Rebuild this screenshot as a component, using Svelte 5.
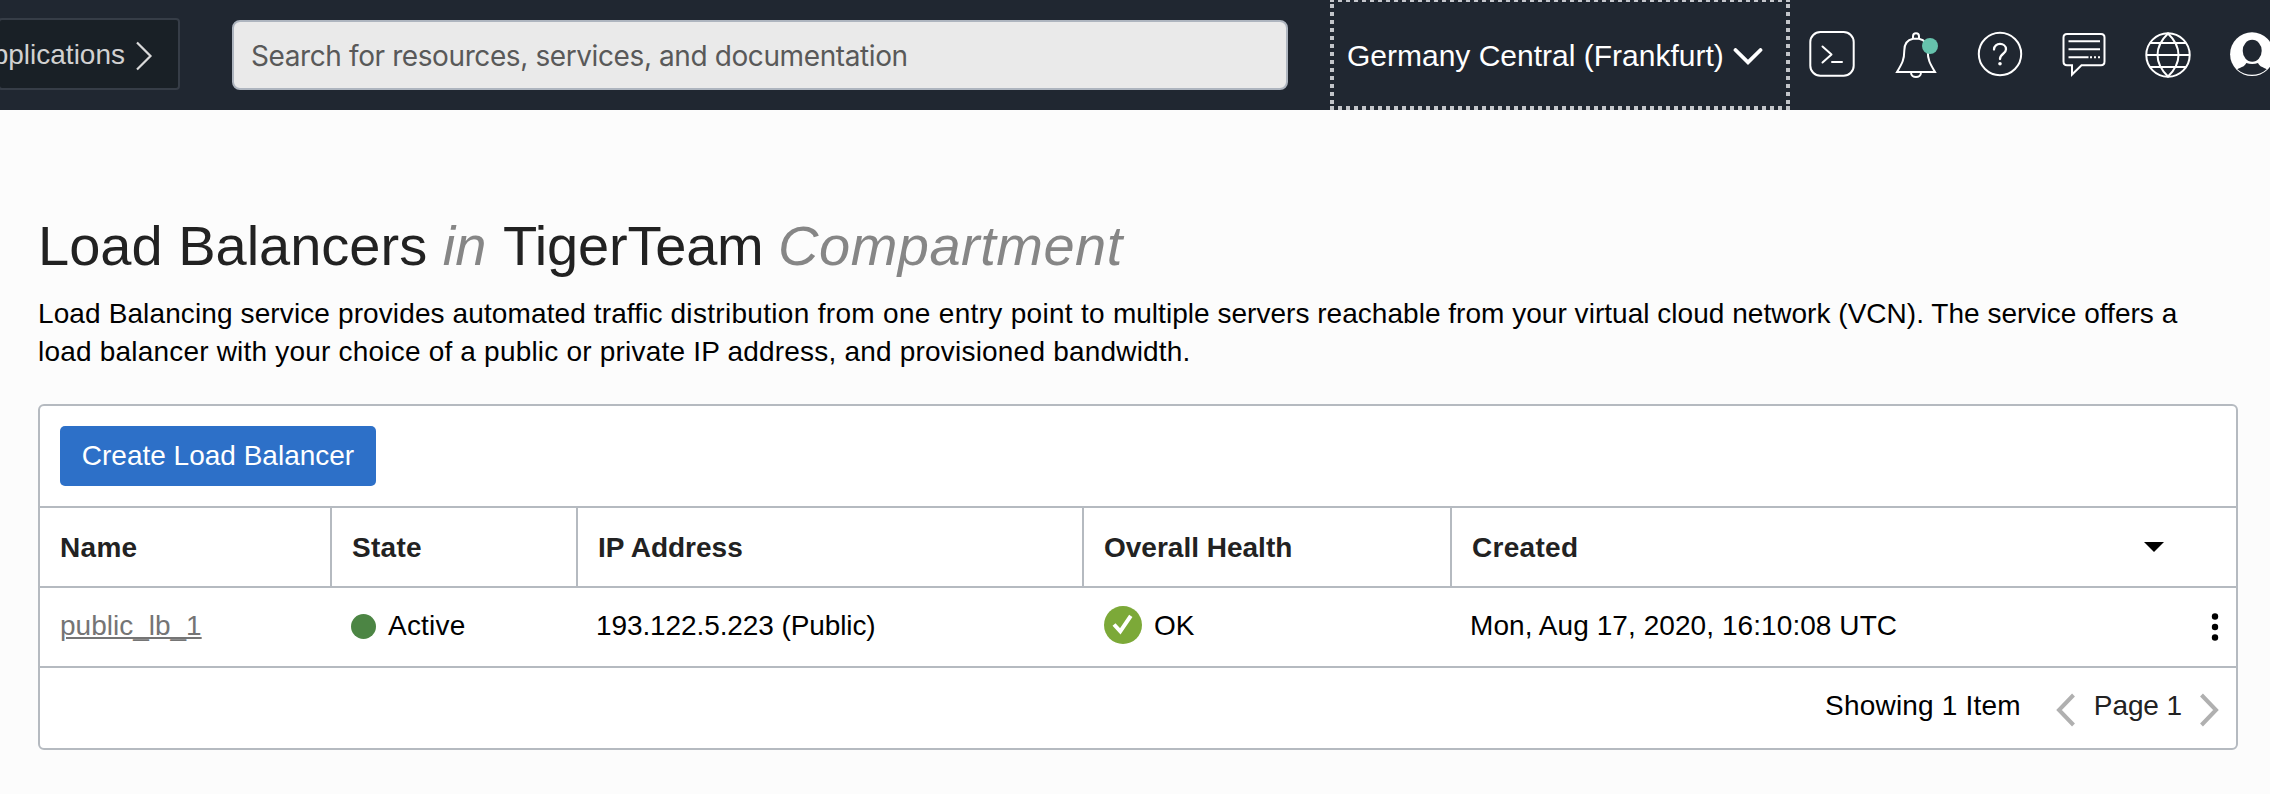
<script>
  const columns = ['Name', 'State', 'IP Address', 'Overall Health', 'Created'];
</script>

<header class="topbar">
  <button class="apps">Applications
    <svg width="18" height="30" viewBox="0 0 18 30"><path d="M2 1.500 15.500 15 2 28.500" /></svg>
  </button>
  <div class="search">Search for resources, services, and documentation</div>
  <button class="region">
    <svg class="dots" width="460" height="110" viewBox="0 0 460 110">
      <path d="M0 0H460M0 108H460" stroke-dasharray="4 4" stroke-width="4" />
      <path d="M2 4V106M458 4V106" stroke-dasharray="4 4" stroke-width="4" />
    </svg>
    <span>Germany Central (Frankfurt)</span>
    <svg class="chev" width="30" height="18" viewBox="0 0 30 18"><path d="M2.500 2 15 14.300 27.500 2" /></svg>
  </button>
  <nav class="tools">
    <svg width="48" height="48" viewBox="0 0 48 48">
      <rect x="2.300" y="2.100" width="43.400" height="43.600" rx="10" />
      <path d="M14.500 16.500 23.500 24.500 14.500 32.500M24 32H34" stroke-linecap="round" stroke-linejoin="round" />
    </svg>
    <svg width="48" height="48" viewBox="0 0 48 48">
      <path d="M21 9V6.300a3 3 0 0 1 6 0V9" />
      <path d="M21 8.800C15 10 12.300 14.500 12.300 20.500C12.300 30 10 33.500 5 42H43C38 33.500 35.700 30 35.700 20.500C35.700 14.500 33 10 27 8.800Z" />
      <path d="M19 42.500C19 48.500 29 48.500 29 42.500" />
      <circle cx="38" cy="16" r="8" fill="#66c2ac" stroke="none" />
    </svg>
    <svg width="48" height="48" viewBox="0 0 48 48">
      <circle cx="24" cy="24" r="21.200" />
      <path d="M18 19.500C18 12 30 12.300 30 19.300C30 24 24 23.500 24 29" stroke-width="2.300" stroke-linecap="round" />
      <circle cx="24" cy="33.700" r="1.800" fill="#fff" stroke="none" />
    </svg>
    <svg width="48" height="48" viewBox="0 0 48 48">
      <path d="M7 4H41Q44.500 4 44.500 7.500V31.500Q44.500 35.200 41 35.200H21.500L12 44.500V35.200H7Q3.500 35.200 3.500 31.500V7.500Q3.500 4 7 4Z" />
      <path d="M8.500 11.300H40M8.500 19.300H40M8.500 27.300H28.500M30 27.300h2M34 27.300h2M38 27.300h2" />
    </svg>
    <svg width="48" height="48" viewBox="0 0 48 48">
      <circle cx="24" cy="25" r="21.700" />
      <path d="M24 3.500C10 17 10 33 24 46.500C38 33 38 17 24 3.500ZM2.300 25H45.700M6 13H42M6 37H42" />
    </svg>
    <svg width="48" height="48" viewBox="0 0 48 48">
      <circle cx="24" cy="24.200" r="21.900" fill="#fff" stroke="none" />
      <g fill="#202731" stroke="none">
        <ellipse cx="24.200" cy="20.800" rx="9.500" ry="11" />
        <path d="M9.300 39.300C13 37 16.500 37 18.300 33C22 34.300 26.500 34.300 30 33C31.800 37 35.200 37 38.700 39.300C30.500 46.700 17.500 46.700 9.300 39.300Z" />
      </g>
    </svg>
  </nav>
</header>

<main>
  <h1>Load Balancers <em>in</em> <span class="name">TigerTeam</span> <em class="kind">Compartment</em></h1>
  <p>
    <span class="line">Load Balancing service provides automated traffic <span class="loose">distribution from one entry point to</span> <span class="tight">multiple servers reachable from your virtual cloud network (VCN). The service offers a</span></span>
    <span class="line last">load balancer with your choice of a public or private IP address, and provisioned bandwidth.</span>
  </p>
  <section class="panel">
    <div class="toolbar"><button class="create">Create Load Balancer</button></div>
    <div class="row head">
      {#each columns as c}
        <div class:wide={c === 'Name' || c === 'State' || c === 'Created'}>{c}
          {#if c === 'Created'}<svg class="sort" width="20" height="10" viewBox="0 0 20 10"><path d="M0 0H20L10 10Z" /></svg>{/if}
        </div>
      {/each}
    </div>
    <div class="row body">
      <div><a href="#lb">public_lb_1</a></div>
      <div class="state"><i class="dot"></i>Active</div>
      <div class="ip">193.122.5.223 (Public)</div>
      <div><svg class="check" width="38" height="38" viewBox="0 0 38 38"><circle cx="19" cy="19" r="19" fill="#7ca938" /><path d="M10 18.500 16.300 25.300 26.800 9.800" fill="none" stroke="#fff" stroke-width="4" /></svg>OK</div>
      <div class="date">Mon, Aug 17, 2020, 16:10:08 UTC
        <svg class="kebab" width="8" height="28" viewBox="0 0 8 28"><circle cx="4" cy="3.500" r="3.200" /><circle cx="4" cy="14" r="3.200" /><circle cx="4" cy="24.500" r="3.200" /></svg>
      </div>
    </div>
    <footer>
      <span class="count">Showing 1 Item</span>
      <svg width="20" height="34" viewBox="0 0 20 34"><path d="M17.500 2 3 17 17.500 32" /></svg>
      <span class="page">Page 1</span>
      <svg width="20" height="34" viewBox="0 0 20 34"><path d="M2.500 2 17 17 2.500 32" /></svg>
    </footer>
  </section>
</main>

<style>
  :global(body) { background: #fcfcfc; }
  .topbar, main { font-family: "Liberation Sans", Arial, sans-serif; font-size: 28px; box-sizing: border-box; }
  button { font: inherit; color: inherit; box-sizing: border-box; border: 0; margin: 0; padding: 0; background: none; white-space: nowrap; }
  svg { flex: none; display: block; fill: none; }
  .topbar { width: 2270px; height: 110px; background: #202731; display: flex; align-items: center; overflow: hidden; color: #fff; }
  .apps { width: 182px; height: 72px; margin: -2px 0 0 -2px; flex: none; display: flex; align-items: center; justify-content: flex-end; gap: 10px; padding: 1px 25px 0 0; border: 2px solid #363d47; border-radius: 4px; background: #192026; color: #d1d1d1; }
  .apps svg { margin-top: 3px; }
  .apps path { stroke: #dadada; stroke-width: 2.200; }
  .search { box-sizing: border-box; width: 1056px; height: 70px; margin-left: 52px; flex: none; display: flex; align-items: center; padding: 2px 0 0 17px; border: 2px solid #aeb5bf; border-radius: 8px; background: #eaeaea; color: #595959; font-family: Inter, sans-serif; letter-spacing: -0.4px; white-space: nowrap; }
  .region { width: 460px; height: 110px; margin-left: 42px; flex: none; display: flex; align-items: center; position: relative; padding: 1px 0 0 17px; font-size: 30px; }
  .dots { position: absolute; inset: 0; stroke: #c3c5ca; }
  .chev { margin-left: 9px; margin-top: 2px; }
  .chev path { stroke: #fff; stroke-width: 3.800; stroke-linecap: round; }
  .tools { display: flex; align-items: center; gap: 36px; margin: -2px 0 0 18px; }
  .tools svg { stroke: #fff; stroke-width: 2; }
  main { padding: 104px 0 0 38px; width: 2238px; }
  h1 { margin: 0; font-size: 56px; font-weight: 400; line-height: 64px; color: #222; white-space: nowrap; }
  h1 em { color: #868686; }
  .name { margin-left: 1px; letter-spacing: -0.2px; }
  .kind { margin-left: -1px; letter-spacing: 0.5px; }
  p { margin: 17px 0 33px; line-height: 38px; white-space: nowrap; color: #000; }
  .line { display: block; letter-spacing: 0.115px; }
  .loose { letter-spacing: 0.31px; }
  .tight { letter-spacing: 0.03px; }
  .last { letter-spacing: 0.2px; }
  .panel { box-sizing: border-box; width: 2200px; height: 346px; border: 2px solid #b5bac0; border-radius: 6px; background: #fff; color: #000; }
  .toolbar { height: 102px; padding: 20px; box-sizing: border-box; border-bottom: 2px solid #b5bac0; }
  .create { height: 60px; width: 316px; background: #2d70c8; color: #fff; border-radius: 5px; }
  .row { display: grid; grid-template-columns: 292px 246px 506px 368px 1fr; height: 80px; box-sizing: border-box; border-bottom: 2px solid #b5bac0; }
  .row > div { display: flex; align-items: center; padding-left: 20px; box-sizing: border-box; white-space: nowrap; }
  .head { font-weight: 700; color: #222; }
  .head > div { padding-top: 2px; }
  .head > div:not(:last-child) { border-right: 2px solid #b5bac0; }
  .head .wide { letter-spacing: 0.3px; }
  .sort { margin: 0 72px 2px auto; fill: #000; }
  .body > div { padding-bottom: 2px; }
  .row > .state { padding-left: 19px; letter-spacing: 0.2px; }
  .row > .ip { padding-left: 18px; letter-spacing: -0.1px; }
  .row > .date { padding-left: 18px; letter-spacing: 0.07px; }
  .dot { width: 25px; height: 25px; border-radius: 50%; background: #4c8544; margin-right: 12px; }
  .check { margin: -2px 12px 0 0; }
  .kebab { margin: 2px 17px 0 auto; fill: #000; }
  a { color: #757575; text-decoration: underline; text-decoration-thickness: 2px; text-underline-offset: 2px; }
  footer { height: 80px; box-sizing: border-box; display: flex; align-items: center; justify-content: flex-end; padding: 0 17px 4px 0; }
  footer path { stroke: #b0b0b0; stroke-width: 4; }
  footer svg { margin-top: 8px; }
  .count { margin-right: 35px; letter-spacing: 0.2px; }
  .page { margin: 0 17px 0 18px; color: #222; letter-spacing: -0.1px; }
</style>
